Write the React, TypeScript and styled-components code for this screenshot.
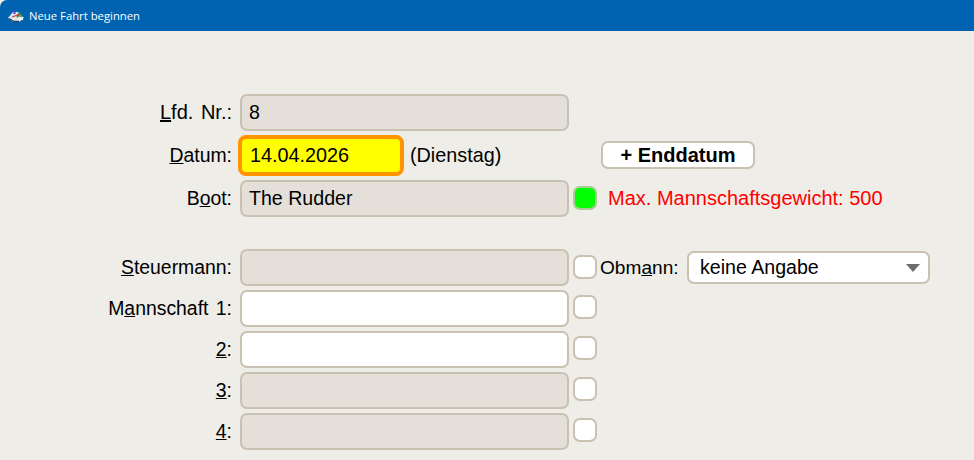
import styled, { createGlobalStyle } from "styled-components";

const GlobalStyle = createGlobalStyle`
  html, body {
    margin: 0;
    padding: 0;
    background: #eeede8;
  }
  body {
    font-family: "Liberation Sans", Arial, sans-serif;
    color: #000;
  }
`;

const crew = [
  { mark: "2", rest: ":", enabled: true },
  { mark: "3", rest: ":", enabled: false },
  { mark: "4", rest: ":", enabled: false },
];

export default function App() {
  return (
    <Window>
      <GlobalStyle />
      <TitleBar>
        <AppIcon />
        <TitleText>Neue Fahrt beginnen</TitleText>
      </TitleBar>
      <Form>
        <Row>
          <Label $wide>
            <u>L</u>fd. Nr.:
          </Label>
          <Field $disabled>8</Field>
        </Row>
        <DateRow>
          <Label>
            <u>D</u>atum:
          </Label>
          <DateField>14.04.2026</DateField>
          <Weekday>(Dienstag)</Weekday>
          <EndDateButton>+ Enddatum</EndDateButton>
        </DateRow>
        <Row>
          <Label>
            B<u>o</u>ot:
          </Label>
          <Field $disabled>The Rudder</Field>
          <Indicator />
          <Warning>Max. Mannschaftsgewicht: 500</Warning>
        </Row>
        <CrewRow>
          <Label>
            <u>S</u>teuermann:
          </Label>
          <Field $disabled />
          <Indicator $plain />
          <SelectLabel>
            Obm<u>a</u>nn:
          </SelectLabel>
          <Select>
            keine Angabe
            <Arrow />
          </Select>
        </CrewRow>
        <Row>
          <Label>
            M<u>a</u>nnschaft 1:
          </Label>
          <Field />
          <CheckBox />
        </Row>
        {crew.map((c) => (
          <Row key={c.mark}>
            <Label>
              <u>{c.mark}</u>
              {c.rest}
            </Label>
            <Field $disabled={!c.enabled} />
            <CheckBox />
          </Row>
        ))}
      </Form>
    </Window>
  );
}

const AppIcon = () => (
  <svg width="16" height="14" viewBox="0 0 16 14">
    <path d="M0 9 L5 3 H10 L16 9 L11 13 H5 Z" fill="#dfe8f0" />
    <path d="M8 7.5 L11 3 L15 8 Z" fill="#35a94a" />
    <path d="M4 8 L11 5.5 L9 8.5" stroke="#cf3b3b" strokeWidth="1.2" fill="none" />
    <path d="M1 9.5 L6 12.5 H11" stroke="#2c3d55" strokeWidth="1.3" fill="none" />
    <path d="M6.5 1 V5" stroke="#5b3fc0" strokeWidth="2" fill="none" />
    <path d="M10 10.5 H15" stroke="#f4f7fa" strokeWidth="1.2" fill="none" />
  </svg>
);

const Window = styled.div`
  width: 974px;
  height: 460px;
  overflow: hidden;
  background: #eeede8;
`;

const TitleBar = styled.div`
  height: 31px;
  box-sizing: border-box;
  display: flex;
  align-items: center;
  gap: 5px;
  padding-left: 8px;
  background: #0063b1;
  border-top-left-radius: 7px;
`;

const TitleText = styled.span`
  font-family: "Open Sans", "Noto Sans", sans-serif;
  font-size: 11.3px;
  color: #fff;
`;

const Form = styled.div`
  display: flex;
  flex-direction: column;
  gap: 4px;
  padding-top: 63px;
  font-size: 20px;
`;

const Row = styled.div`
  display: flex;
  align-items: center;
  height: 37px;
`;

const DateRow = styled(Row)`
  height: 41px;
`;

const CrewRow = styled(Row)`
  margin-top: 28px;
`;

const Label = styled.label<{ $wide?: boolean }>`
  width: 232px;
  margin-right: 8px;
  font-size: ${(p) => (p.$wide ? "20px" : "19.4px")};
  word-spacing: 2px;
  text-align: right;
  white-space: nowrap;
  flex: none;
`;

const Field = styled.div<{ $disabled?: boolean }>`
  width: 329px;
  height: 37px;
  box-sizing: border-box;
  flex: none;
  display: flex;
  align-items: center;
  padding-left: 7px;
  font-size: 19.6px;
  border: 2px solid #c9c1b1;
  border-radius: 7px;
  background: ${(p) => (p.$disabled ? "#e4e0d9" : "#fff")};
`;

const DateField = styled.div`
  width: 166px;
  height: 41px;
  margin-left: -2px;
  box-sizing: border-box;
  flex: none;
  display: flex;
  align-items: center;
  padding-left: 8px;
  font-size: 19.8px;
  border: 4px solid #ff9300;
  border-radius: 8px;
  background: #ff0;
`;

const Weekday = styled.span`
  margin-left: 6px;
  width: 191px;
  flex: none;
  font-size: 19.8px;
  white-space: nowrap;
`;

const EndDateButton = styled.button`
  width: 154px;
  height: 28px;
  margin-top: -1px;
  padding: 0;
  box-sizing: border-box;
  border: 2px solid #c9c1b1;
  border-radius: 7px;
  background: #fff;
  color: #000;
  font-family: inherit;
  font-size: 20px;
  font-weight: 700;
`;

const CheckBox = styled.div`
  width: 24px;
  height: 24px;
  margin-left: 4px;
  align-self: flex-start;
  margin-top: 5px;
  box-sizing: border-box;
  flex: none;
  border: 2px solid #c9c1b1;
  border-radius: 7px;
  background: #fff;
`;

const Indicator = styled(CheckBox)<{ $plain?: boolean }>`
  margin-top: 6px;
  border-color: ${(p) => (p.$plain ? "#c9c1b1" : "#a8cc94")};
  background: ${(p) => (p.$plain ? "#fff" : "#0f0")};
`;

const Warning = styled.span`
  margin-left: 11px;
  color: #f00;
  white-space: nowrap;
`;

const SelectLabel = styled.span`
  margin-left: 3px;
  width: 87px;
  flex: none;
  font-size: 19.1px;
  white-space: nowrap;
`;

const Select = styled.div`
  position: relative;
  width: 243px;
  height: 33px;
  box-sizing: border-box;
  flex: none;
  display: flex;
  align-items: center;
  padding-left: 11px;
  font-size: 19.6px;
  border: 2px solid #c9c1b1;
  border-radius: 7px;
  background: #fff;
`;

const Arrow = styled.span`
  position: absolute;
  right: 8px;
  top: 11px;
  width: 0;
  height: 0;
  border-left: 7.5px solid transparent;
  border-right: 7.5px solid transparent;
  border-top: 8px solid #6d6d6d;
`;
